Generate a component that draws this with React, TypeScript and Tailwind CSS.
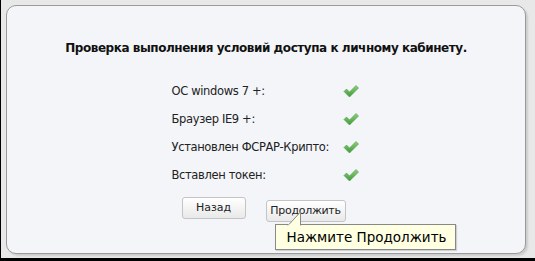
import React from 'react';

const checks = [
  'ОС windows 7 +:',
  'Браузер IE9 +:',
  'Установлен ФСРАР-Крипто:',
  'Вставлен токен:',
];

function Check() {
  return (
    <svg width="16" height="14" viewBox="0 0 16 14">
      <defs>
        <linearGradient id="ck" x1="0" y1="0" x2="0" y2="1">
          <stop offset="0" stopColor="#8fd07a" />
          <stop offset="1" stopColor="#3f9a3a" />
        </linearGradient>
      </defs>
      <path d="M1 7.5 L3.5 5 L6.5 8 L13 1.5 L15.5 4 L6.5 13 Z" fill="url(#ck)" stroke="#4a9a44" strokeWidth="0.6" strokeLinejoin="round" />
    </svg>
  );
}

export default function App() {
  return (
    <div className="w-[535px] h-[261px] overflow-hidden bg-black pl-px pb-[3px]" style={{ fontFamily: '"DejaVu Sans", Verdana, sans-serif' }}>
      <div className="h-full bg-[#e8e8e8] pt-[5px] pl-[5px] pr-[9px] pb-[4px]">
        <div className="h-full rounded-[10px] border border-[#9a9a9a] bg-[#f3f5f9] shadow-[2px_2px_2px_rgba(0,0,0,0.12)] flex flex-col items-center pt-[34px]">
          <h1 className="text-[12px] font-bold text-[#111] leading-[16px] tracking-[-0.45px]">
            Проверка выполнения условий доступа к личному кабинету.
          </h1>

          <div className="mt-[27px] w-[187px] ml-[-2px] flex flex-col gap-[12px]">
            {checks.map((c) => (
              <div key={c} className="flex items-center justify-between h-[16px]">
                <span className="text-[11.5px] text-[#222] leading-[16px] tracking-[-0.35px]">{c}</span>
                <Check />
              </div>
            ))}
          </div>

          <div className="mt-[14px] flex gap-[20px] ml-[-5px]">
            <button className="w-[64px] h-[22px] rounded-[3px] border border-[#c4c4c4] bg-gradient-to-b from-white to-[#e9e9e9] text-[11px] text-[#222]">
              Назад
            </button>
            <div className="relative">
              <button className="w-[80px] h-[22px] rounded-[3px] border border-[#c4c4c4] bg-gradient-to-b from-white to-[#e9e9e9] text-[11px] text-[#222] tracking-[-0.3px]">
                Продолжить
              </button>
              <div className="absolute left-[9px] top-[27px] w-[181px] h-[26px] border border-[#888] bg-[#ffffe1] shadow-[1px_1px_1px_rgba(0,0,0,0.15)] flex items-center pl-[11px]">
                <span className="text-[13.5px] text-black leading-[20px] whitespace-nowrap">Нажмите Продолжить</span>
                <svg className="absolute left-[11px] top-[-14px]" width="16" height="15" viewBox="0 0 16 15">
                  <path d="M1 14.5 L13.5 1 L13.5 14.5" fill="#ffffe1" stroke="#888" strokeWidth="1" />
                  <rect x="1.5" y="13.5" width="11.5" height="2" fill="#ffffe1" />
                </svg>
              </div>
            </div>
          </div>
        </div>
      </div>
    </div>
  );
}
